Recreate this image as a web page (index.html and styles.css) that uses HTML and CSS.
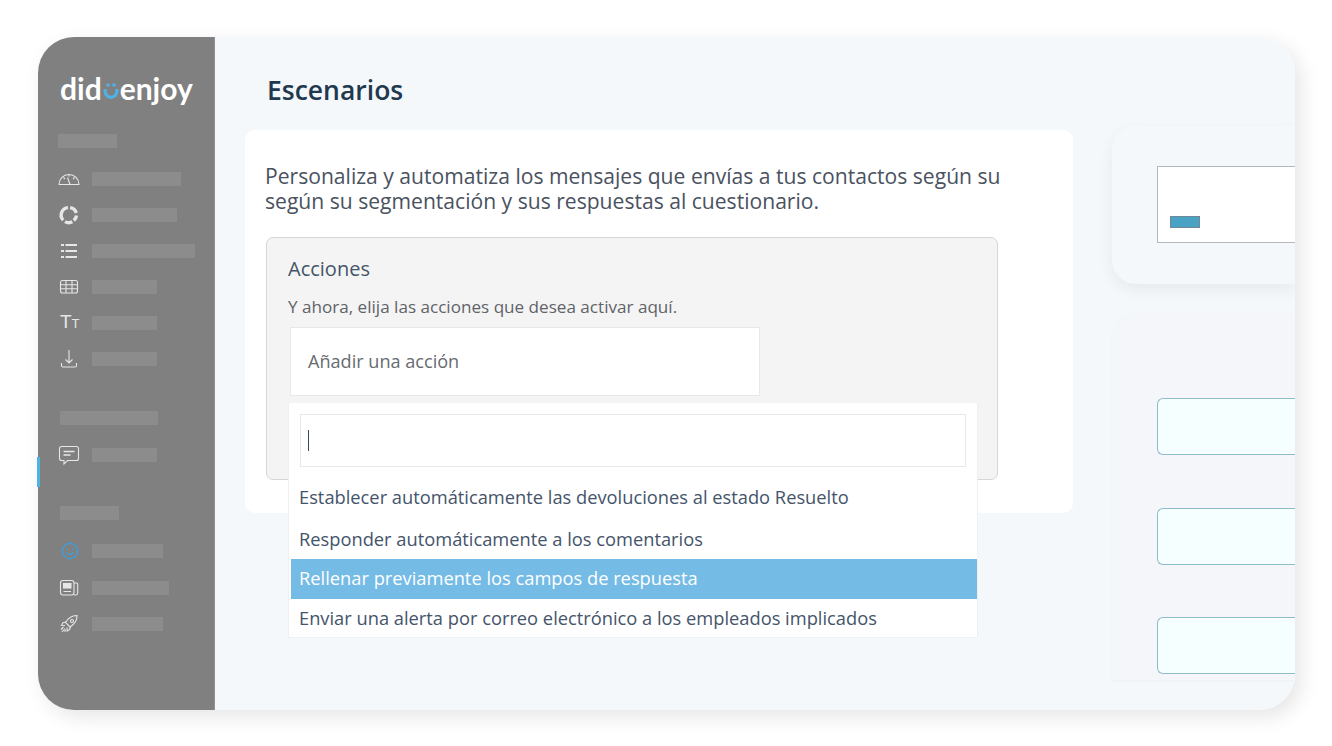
FILE: index.html
```html
<!DOCTYPE html>
<html lang="es">
<head>
<meta charset="utf-8">
<title>Escenarios</title>
<link rel="stylesheet" href="styles.css">
</head>
<body>
<div class="window">
  <aside class="sidebar">
    <div class="logo"><span>did</span><svg class="logo-smile" viewBox="0 0 18 24" width="18" height="24"><circle cx="6" cy="9" r="1.800" fill="#4db3e6"/><circle cx="12" cy="9" r="1.800" fill="#4db3e6"/><path d="M3.200 13v2.500a5.800 5.800 0 0 0 11.600 0V13" fill="none" stroke="#4db3e6" stroke-width="3.200"/></svg><span>enjoy</span></div>
    <div class="bar head-bar"></div>
    <nav class="group">
      <div class="row"><svg class="ico" viewBox="0 0 22 22"><path d="M1 16.500a10 10 0 0 1 20 0z"/><path d="M5.500 9.500l1.500 1.500M11 6.500v2M16.500 9.500l-1.500 1.500M9.500 9.500l2.500 7"/></svg><div class="bar w89"></div></div>
      <div class="row"><svg class="ico thick" viewBox="0 0 22 22"><path d="M10 3.600a7.500 7.500 0 0 0-4.800 12.600M7 17.600a7.500 7.500 0 0 0 7.300 .2M15.800 16.500a7.500 7.500 0 0 0 2.700-5M18.300 9a7.500 7.500 0 0 0-6.200-5.400" stroke-width="3.400"/></svg><div class="bar w85"></div></div>
      <div class="row"><svg class="ico thick" viewBox="0 0 22 22"><path d="M3 5h3M7.500 5h11.500M3 11h3M7.500 11h11.500M3 17h3M7.500 17h11.500" stroke-width="2.200"/></svg><div class="bar w103"></div></div>
      <div class="row"><svg class="ico" viewBox="0 0 22 22"><rect x="2.500" y="4.500" width="17" height="12.500" rx="2"/><path d="M2.500 8.700h17M2.500 12.800h17M8 4.500v12.500M14 4.500v12.500"/></svg><div class="bar w65"></div></div>
      <div class="row"><span class="tt">T<small>T</small></span><div class="bar w65"></div></div>
      <div class="row"><svg class="ico" viewBox="0 0 22 22"><path d="M11 2v13M7.500 11.500l3.500 3.500 3.500-3.500M3.500 15v2.500a1.500 1.500 0 0 0 1.500 1.500h12a1.500 1.500 0 0 0 1.500-1.500V15"/></svg><div class="bar w65"></div></div>
    </nav>
    <div class="bar section-bar one"></div>
    <nav class="group chat-group">
      <div class="row"><svg class="ico" viewBox="0 0 22 22"><path d="M3.500 2.500h15a2 2 0 0 1 2 2v10a2 2 0 0 1-2 2h-9l-3.500 3.500v-3.500h-2.500a2 2 0 0 1-2-2v-10a2 2 0 0 1 2-2z"/><path d="M5.500 7.500h11M5.500 11h7" stroke-width="1.600"/></svg><div class="bar w65"></div></div>
      <i class="indicator"></i>
    </nav>
    <div class="bar section-bar two"></div>
    <nav class="group last-group">
      <div class="row"><svg class="ico blue" viewBox="0 0 22 22"><circle cx="12" cy="11" r="7.600"/><circle class="eye" cx="9.500" cy="9.200" r=".8"/><circle class="eye" cx="14.500" cy="9.200" r=".8"/><path d="M8.500 12.500a4 4 0 0 0 7 0"/></svg><div class="bar w71"></div></div>
      <div class="row"><svg class="ico" viewBox="0 0 22 22"><rect x="2.500" y="3.500" width="13.500" height="14.500" rx="2.500"/><rect x="5.500" y="6.500" width="7.500" height="4.500" fill="#e6e6e6"/><path d="M5.500 14.500h7.500M16 6h2.500a1.200 1.200 0 0 1 1.200 1.200V16a2.200 2.200 0 0 1-2.200 2h-1.500"/></svg><div class="bar w77"></div></div>
      <div class="row"><svg class="ico" viewBox="0 0 22 22"><path d="M19 2.500c-5-.2-8.500 2.200-11.500 7l4.500 4.500c4.800-3 7.200-6.500 7-11.500z"/><circle cx="14" cy="8" r="1.500"/><path d="M8 9l-3 .8-1.500 2.500 3.500.2M12.500 13.500l-.8 3-2.500 1.500-.2-3.500M5.500 14l-2.500 2.500M7 15.500l-3 3.500M8 17l-1.500 1.500"/></svg><div class="bar w71"></div></div>
    </nav>
  </aside>
  <main class="main">
    <section class="left">
      <h1 class="title">Escenarios</h1>
      <div class="card">
        <p class="lead">Personaliza y automatiza los mensajes que envías a tus contactos según su<br>según su segmentación y sus respuestas al cuestionario.</p>
        <div class="panel">
          <h2 class="panel-title">Acciones</h2>
          <p class="panel-help">Y ahora, elija las acciones que desea activar aquí.</p>
          <div class="add-box">Añadir una acción</div>
          <div class="dropdown">
            <div class="search"><i class="caret"></i></div>
            <ul class="options">
              <li class="opt first">Establecer automáticamente las devoluciones al estado Resuelto</li>
              <li class="opt second">Responder automáticamente a los comentarios</li>
              <li class="opt active">Rellenar previamente los campos de respuesta</li>
              <li class="opt fourth">Enviar una alerta por correo electrónico a los empleados implicados</li>
            </ul>
          </div>
        </div>
      </div>
    </section>
    <section class="right">
      <div class="side-card top-card">
        <div class="white-box"><i class="mini-btn"></i></div>
      </div>
      <div class="side-card bottom-card">
        <div class="field"></div>
        <div class="field"></div>
        <div class="field"></div>
      </div>
    </section>
  </main>
</div>
</body>
</html>
```
FILE: styles.css
```css
* { box-sizing: border-box; }
html, body { margin: 0; height: 100%; }
body {
  background: #fff;
  padding: 37px 37px 36px 38px;
  font-family: "Open Sans", "Liberation Sans", sans-serif;
  overflow: hidden;
}
.window {
  display: flex;
  width: 1257px;
  height: 673px;
  border-radius: 36px;
  box-shadow: 6px 7px 20px rgba(0, 0, 0, .1);
}
.sidebar {
  flex: 0 0 177px;
  background: #808080;
  border-radius: 36px 0 0 36px;
  padding: 33px 0 0 20px;
  border-right: 1px solid #8e9296;
}
.logo {
  display: flex;
  align-items: flex-start;
  height: 64px;
  margin-left: 2px;
  color: #fff;
  font-family: Lato, "Open Sans", sans-serif;
  font-weight: 700;
  font-size: 30px;
  line-height: 36px;
}
.logo-smile { margin: 6px 0 0; flex: none; }
.bar { height: 14px; background: #8c8c8c; }
.head-bar { width: 59px; }
.group { position: relative; }
.group:first-of-type { margin-top: 13px; }
.row { display: flex; align-items: center; height: 36px; }
.ico {
  flex: none;
  width: 22px;
  height: 22px;
  margin-right: 12px;
  fill: none;
  stroke: #e6e6e6;
  stroke-width: 1.1;
}
.ico.blue { stroke: #3aa0e0; stroke-width: 1.400; }
.ico .eye { fill: #3aa0e0; stroke: none; }
.tt {
  flex: none;
  width: 22px;
  margin: 0 10px 0 2px;
  color: #e6e6e6;
  font-family: "Liberation Sans", sans-serif;
  font-size: 19px;
  line-height: 22px;
}
.tt small { font-size: 13px; }
.w89 { width: 89px; } .w85 { width: 85px; } .w103 { width: 103px; }
.w65 { width: 65px; } .w71 { width: 71px; } .w77 { width: 77px; }
.section-bar { margin-left: 2px; }
.section-bar.one { width: 98px; margin-top: 34px; }
.chat-group { margin-top: 12px; }
.indicator {
  position: absolute;
  left: -21px;
  top: 20px;
  width: 3px;
  height: 30px;
  background: #4db3e6;
}
.section-bar.two { width: 59px; margin-top: 33px; }
.last-group { margin-top: 13px; }
.last-group .row { height: 36.500px; }

.main {
  flex: 1;
  display: flex;
  min-width: 0;
  background: #f5f8fb;
  border-radius: 0 36px 36px 0;
  overflow: hidden;
}
.left {
  flex: 0 0 897px;
  padding: 0 0 0 30px;
}
.title {
  margin: 0;
  padding: 35px 0 0 22px;
  height: 93px;
  color: #22384f;
  font-size: 26.500px;
  font-weight: 600;
  line-height: 36px;
}
.card {
  width: 828px;
  height: 383px;
  padding: 33px 0 0 20px;
  background: #fff;
  border-radius: 10px;
}
.lead {
  margin: 0 0 24px;
  color: #4a5260;
  font-size: 21.100px;
  line-height: 25px;
}
.panel {
  position: relative;
  width: 732px;
  height: 243px;
  margin-left: 1px;
  padding: 18px 0 0 21px;
  background: #f4f4f4;
  border: 1px solid #d6d6d6;
  border-radius: 7px;
}
.panel-title {
  margin: 0;
  color: #44546a;
  font-size: 20px;
  font-weight: 400;
  line-height: 26px;
}
.panel-help {
  margin: 13px 0 9px;
  color: #5f6368;
  font-size: 17.100px;
  line-height: 23px;
}
.add-box {
  width: 470px;
  height: 69px;
  margin-left: 2px;
  padding-left: 17px;
  background: #fff;
  border: 1px solid #e8e8e8;
  color: #666b70;
  font-size: 18.100px;
  line-height: 67px;
}
.dropdown {
  position: absolute;
  left: 21px;
  top: 165px;
  width: 690px;
  height: 235px;
  padding: 11px 0 0 2px;
  background: #fff;
  border: 1px solid #f0f0f0;
  border-top: 0;
}
.search {
  display: flex;
  align-items: center;
  width: 666px;
  height: 53px;
  margin-left: 9px;
  padding-left: 7px;
  background: #fff;
  border: 1px solid #e8e8e8;
}
.caret { width: 1px; height: 21px; background: #34495e; }
.options { margin: 0; padding: 0; list-style: none; }
.opt {
  height: 40px;
  padding-left: 8px;
  color: #44546a;
  font-size: 18.300px;
  line-height: 40px;
  white-space: nowrap;
}
.opt.first { margin-top: 10px; }
.opt.second { margin-top: 2px; height: 40px; }
.opt.active { background: #74bbe6; color: #fff; line-height: 38px; }
.opt.fourth { line-height: 38px; height: 39px; }

.right {
  flex: 1;
  min-width: 0;
  padding-top: 89px;
}
.side-card {
  background: #f5f8fb;
  border-radius: 24px 0 0 24px;
}
.top-card {
  height: 158px;
  padding: 40px 0 0 45px;
  box-shadow: 0 6px 16px rgba(0, 0, 0, .06);
}
.white-box {
  position: relative;
  height: 77px;
  background: #fff;
  border: 1px solid #b4b8bc;
  border-right: 0;
  padding: 49px 0 0 12px;
}
.mini-btn {
  display: block;
  width: 30px;
  height: 12px;
  background: #4aa3c4;
  border: 1px solid #6f8a96;
}
.bottom-card {
  height: 366px;
  margin-top: 30px;
  padding: 84px 0 0 45px;
  background: #f4f6f9;
  border-radius: 24px 0 0 0;
  box-shadow: 0 1px 3px rgba(0, 0, 0, .03);
}
.field {
  height: 57px;
  margin-bottom: 52.500px;
  background: #f6ffff;
  border: 1px solid #8fbccb;
  border-right: 0;
  border-radius: 6px 0 0 6px;
}
```
